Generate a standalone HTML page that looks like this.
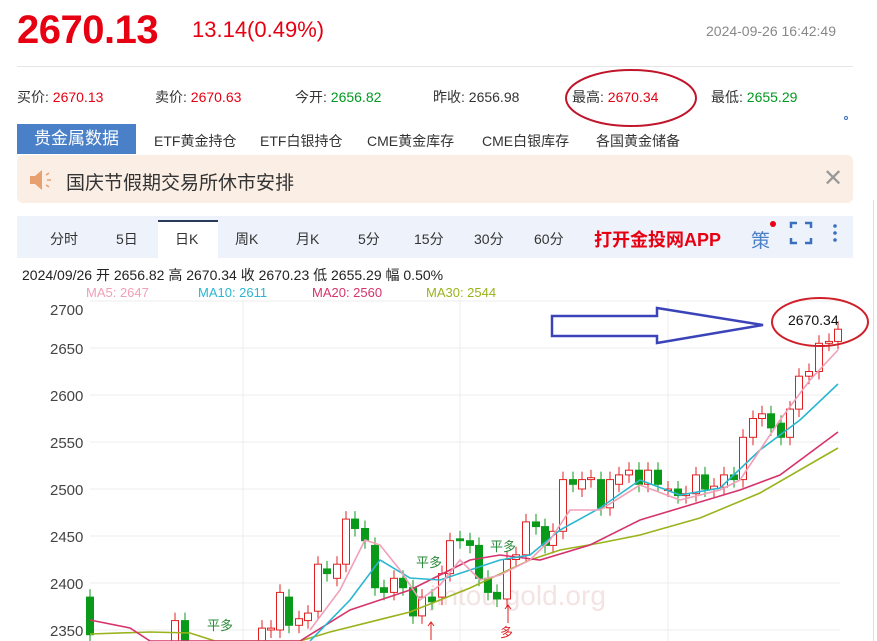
<!DOCTYPE html>
<html><head><meta charset="utf-8"><style>
*{margin:0;padding:0;box-sizing:border-box}
body{width:877px;height:641px;overflow:hidden;background:#fff;font-family:"Liberation Sans","Noto Sans CJK SC",sans-serif;position:relative;color:#333}
.a{position:absolute;white-space:nowrap}
.r{color:#e60012}.g{color:#009a22}
</style></head><body>
<div class="a r" style="left:17px;top:8px;font-size:40px;font-weight:bold;letter-spacing:-0.5px">2670.13</div>
<div class="a r" style="left:192px;top:17px;font-size:22px">13.14(0.49%)</div>
<div class="a" style="left:706px;top:23px;font-size:14px;color:#888">2024-09-26 16:42:49</div>
<div class="a" style="left:17px;top:66px;width:836px;height:1px;background:#e6e6e6"></div>
<div class="a" style="left:17px;top:87px;font-size:14px;color:#333">买价: <span class="r">2670.13</span></div>
<div class="a" style="left:155px;top:87px;font-size:14px">卖价: <span class="r">2670.63</span></div>
<div class="a" style="left:295px;top:87px;font-size:14px">今开: <span class="g">2656.82</span></div>
<div class="a" style="left:433px;top:87px;font-size:14px">昨收: 2656.98</div>
<div class="a" style="left:572px;top:87px;font-size:14px">最高: <span class="r">2670.34</span></div>
<div class="a" style="left:711px;top:87px;font-size:14px">最低: <span class="g">2655.29</span></div>
<svg class="a" style="left:0;top:0" width="877" height="641">
<ellipse cx="631" cy="98" rx="65" ry="28" fill="none" stroke="#c0152a" stroke-width="2"/>
<circle cx="846" cy="118" r="1.5" fill="none" stroke="#3a6fc0"/>
</svg>
<div class="a" style="left:17px;top:124px;width:119px;height:30px;background:#4a80c8;color:#fff;font-size:17px;line-height:30px;text-align:center">贵金属数据</div>
<div class="a" style="left:154px;top:131px;font-size:14px">ETF黄金持仓</div>
<div class="a" style="left:260px;top:131px;font-size:14px">ETF白银持仓</div>
<div class="a" style="left:367px;top:131px;font-size:14px">CME黄金库存</div>
<div class="a" style="left:482px;top:131px;font-size:14px">CME白银库存</div>
<div class="a" style="left:596px;top:131px;font-size:14px">各国黄金储备</div>
<div class="a" style="left:17px;top:155px;width:836px;height:48px;background:#fbeee4;border-radius:6px"></div>
<svg class="a" style="left:28px;top:168px" width="26" height="24"><path d="M2 8h5l7-6v20l-7-6H2z" fill="#e8a070"/><path d="M18 7l3-2M19 12h4M18 17l3 2" stroke="#e8a070" stroke-width="1.5"/></svg>
<div class="a" style="left:66px;top:168px;font-size:19px;color:#333">国庆节假期交易所休市安排</div>
<div class="a" style="left:823px;top:164px;font-size:24px;color:#999">✕</div>
<div class="a" style="left:17px;top:216px;width:836px;height:42px;background:#eef3fb"></div>
<div class="a" style="left:158px;top:220px;width:60px;height:38px;background:#fff;border-top:2px solid #2a3a5a"></div>
<div class="a" style="left:50px;top:229px;font-size:14px">分时</div>
<div class="a" style="left:116px;top:229px;font-size:14px">5日</div>
<div class="a" style="left:175px;top:229px;font-size:14px">日K</div>
<div class="a" style="left:235px;top:229px;font-size:14px">周K</div>
<div class="a" style="left:296px;top:229px;font-size:14px">月K</div>
<div class="a" style="left:358px;top:229px;font-size:14px">5分</div>
<div class="a" style="left:414px;top:229px;font-size:14px">15分</div>
<div class="a" style="left:474px;top:229px;font-size:14px">30分</div>
<div class="a" style="left:534px;top:229px;font-size:14px">60分</div>
<div class="a r" style="left:594px;top:226px;font-size:18px;font-weight:bold">打开金投网APP</div>
<div class="a" style="left:751px;top:226px;font-size:19px;color:#4a80c8">策</div>
<svg class="a" style="left:760px;top:218px" width="100" height="30"><circle cx="13" cy="6" r="3" fill="#e60012"/>
<path d="M31 10v-5h6M45 5h6v5M31 20v5h6M45 25h6v-5" fill="none" stroke="#3a6fc0" stroke-width="2.5"/>
<circle cx="75" cy="8" r="1.8" fill="#3a6fc0"/><circle cx="75" cy="15" r="1.8" fill="#3a6fc0"/><circle cx="75" cy="22" r="1.8" fill="#3a6fc0"/></svg>
<div class="a" style="left:22px;top:265px;font-size:14px;color:#222">2024/09/26 开 2656.82 高 2670.34 收 2670.23 低 2655.29 幅 0.50%</div>
<div class="a" style="left:86px;top:285px;font-size:13px;color:#f0a0b8">MA5: 2647</div>
<div class="a" style="left:198px;top:285px;font-size:13px;color:#29b6d0">MA10: 2611</div>
<div class="a" style="left:312px;top:285px;font-size:13px;color:#d6336c">MA20: 2560</div>
<div class="a" style="left:426px;top:285px;font-size:13px;color:#9ab31c">MA30: 2544</div>
<div class="a" style="left:873px;top:200px;width:1px;height:441px;background:#ddd"></div>
<svg id="ch" class="a" style="left:0;top:0" width="877" height="641" font-family="Liberation Sans, sans-serif"></svg>
<script>
var s='';
var Y=function(p){return 489-(p-2500)*0.94};
var lv=[2700,2650,2600,2550,2500,2450,2400,2350];
lv.forEach(function(p){var y=Y(p);var ty=p==2700?315:y+6;s+='<line x1="90" x2="840" y1="'+y+'" y2="'+y+'" stroke="#ececec"/><text x="50" y="'+ty+'" font-size="15" fill="#444">'+p+'</text>';});
[243,460,668].forEach(function(x){s+='<line x1="'+x+'" x2="'+x+'" y1="300" y2="641" stroke="#ececec"/>';});
s+='<text x="430" y="605" font-size="28" fill="#f0d8d8" opacity="0.7">jintou gold.org</text>';
var d=[[90,2385,2345],[175,2335,2360],[185,2360,2330],[262,2330,2352],[271,2350,2352],[280,2350,2390],[289,2385,2355],[299,2355,2362],[308,2360,2368],[318,2370,2420],[327,2415,2410],[337,2405,2420],[346,2420,2468],[355,2468,2458],[365,2458,2445],[375,2440,2395],[384,2395,2390],[394,2390,2405],[403,2405,2395],[413,2395,2365],[422,2365,2385],[432,2385,2380],[442,2385,2410],[450,2410,2445],[460,2447,2445],[470,2445,2440],[479,2440,2405],[488,2405,2390],[497,2390,2383],[507,2383,2425],[516,2425,2430],[526,2430,2465],[536,2465,2460],[545,2460,2440],[553,2440,2455],[563,2455,2510],[573,2510,2505],[582,2500,2510],[591,2510,2512],[601,2510,2480],[610,2480,2510],[619,2505,2515],[629,2515,2520],[639,2520,2505],[648,2505,2520],[658,2520,2505],[668,2500,2500],[678,2500,2493],[686,2493,2495],[696,2495,2515],[705,2515,2500],[714,2500,2503],[724,2502,2515],[734,2515,2510],[743,2510,2555],[753,2555,2575],[762,2575,2580],[771,2580,2565],[781,2570,2555],[790,2555,2585],[799,2585,2620],[809,2620,2625],[819,2625,2655],[829,2655,2657],[838,2657,2670]];
d.forEach(function(c){var x=c[0],o=c[1],cl=c[2],up=cl>=o,col=up?'#e02020':'#0a9a1a';var t=Y(Math.max(o,cl)),b=Y(Math.min(o,cl));var h=Math.max(b-t,1.5);
s+='<line x1="'+x+'" x2="'+x+'" y1="'+(t-8)+'" y2="'+(b+8)+'" stroke="'+col+'"/>';
s+='<rect x="'+(x-3.5)+'" y="'+t+'" width="7" height="'+h+'" fill="'+(up?'#fff':col)+'" stroke="'+col+'"/>';});
function pl(p,c){s+='<polyline fill="none" stroke="'+c+'" stroke-width="1.6" points="'+p+'"/>';}
pl('90,634 150,632 190,633 215,641 300,641 330,632 410,612 470,588 530,560 560,550 600,543 640,535 700,518 760,493 838,448','#9ab31c');
pl('90,620 130,628 150,641 300,641 350,610 410,590 440,575 470,560 500,555 540,560 590,545 640,520 690,505 740,490 780,475 838,432','#d6336c');
pl('310,641 350,600 380,560 410,578 440,580 470,570 500,560 530,555 560,530 600,508 640,480 680,495 720,488 760,450 800,420 838,384','#29b6d0');
pl('310,630 340,590 365,540 380,545 400,570 420,600 440,585 460,560 480,580 500,575 530,560 550,540 570,510 600,510 640,485 680,500 720,490 740,480 780,420 810,380 838,350','#f0a0b8');
s+='<text x="207" y="630" font-size="13" fill="#2a8a3a">平多</text><text x="416" y="567" font-size="13" fill="#2a8a3a">平多</text><text x="490" y="551" font-size="13" fill="#2a8a3a">平多</text>';
s+='<path d="M431 622v18M428 626l3-4 3 4M508 605v18M505 609l3-4 3 4" stroke="#e02020" fill="none"/><text x="500" y="637" font-size="13" fill="#e02020">多</text>';
s+='<polygon points="552,316 657,316 657,308 763,325 657,343 657,336 552,336" fill="none" stroke="#3a44b8" stroke-width="2.5"/>';
s+='<ellipse cx="820" cy="322" rx="48" ry="24" fill="none" stroke="#d0202a" stroke-width="2"/><text x="788" y="325" font-size="14" fill="#111">2670.34</text>';
document.getElementById('ch').innerHTML=s;
</script>
</body></html>
